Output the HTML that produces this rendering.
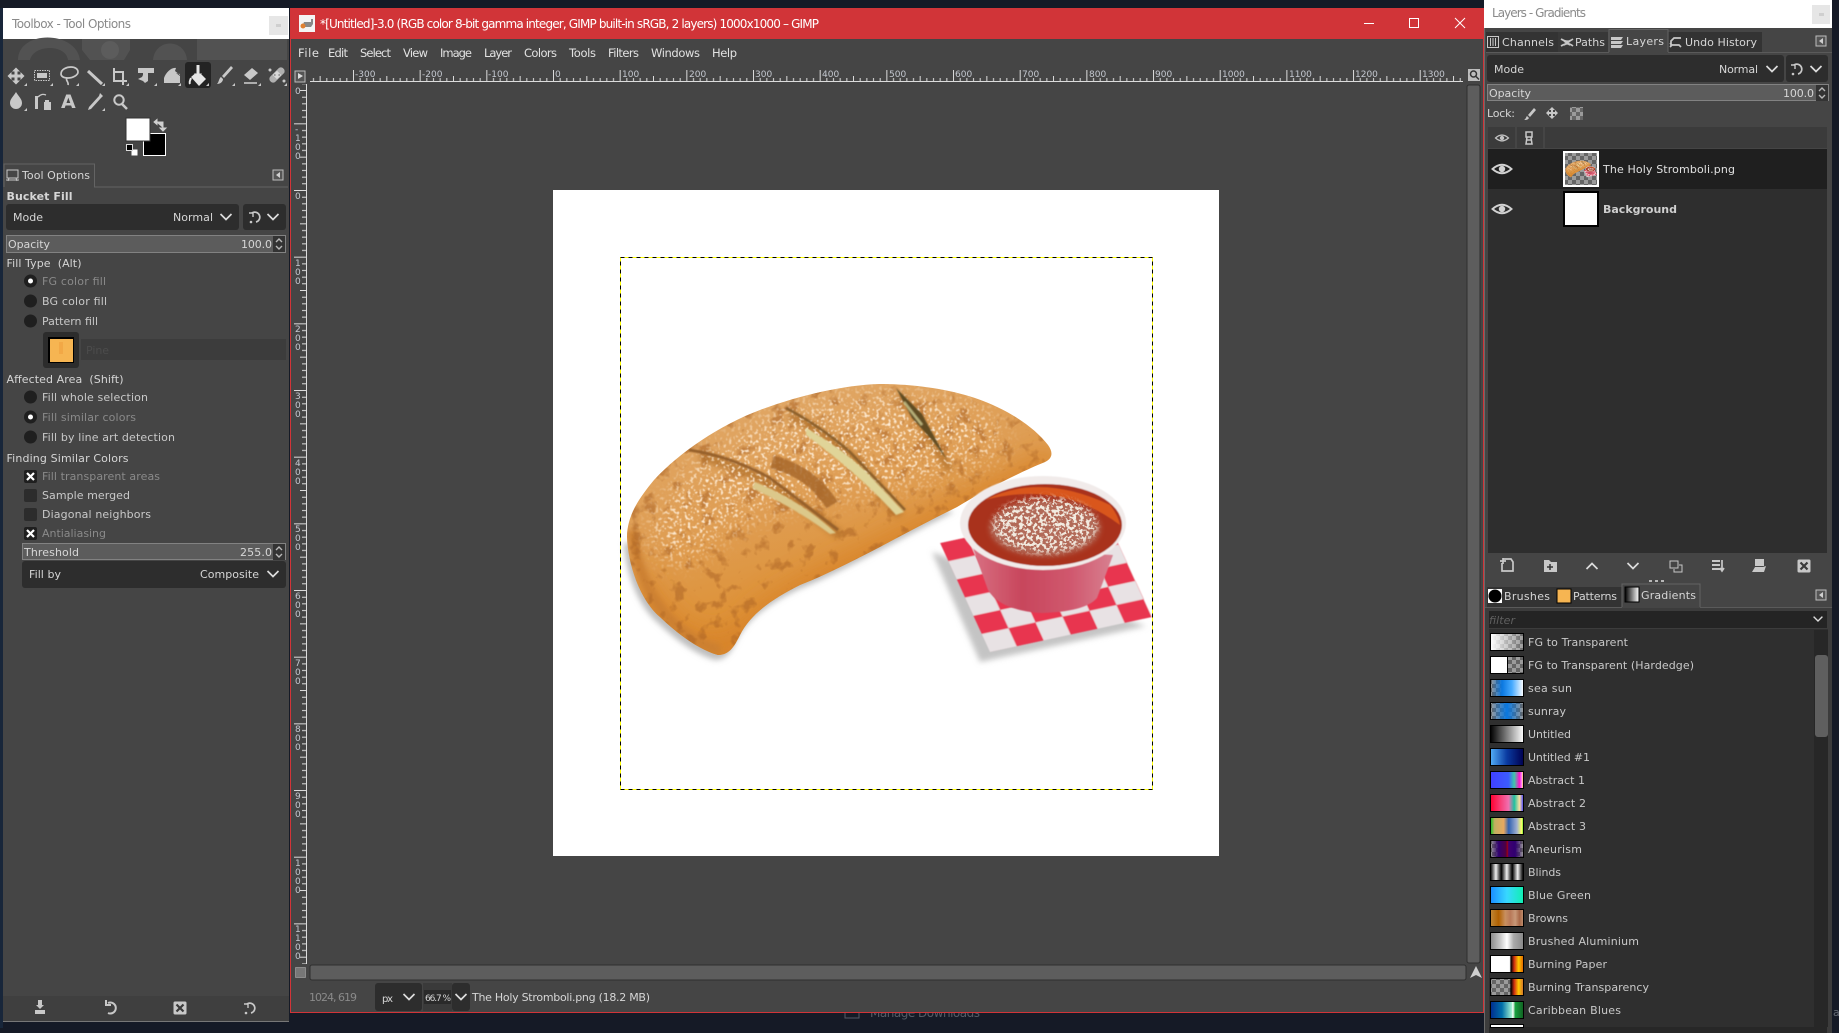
<!DOCTYPE html>
<html lang="en">
<head>
<meta charset="utf-8">
<title>GIMP</title>
<style>
html,body{margin:0;padding:0;background:#151a26;width:1839px;height:1033px;overflow:hidden}
svg{display:block}
text{font-family:"DejaVu Sans","Liberation Sans",sans-serif;font-size:11px;fill:#d6d6d6}
.g{fill:#8a8a8a}
.l{fill:#c9c9c9}
.b{font-weight:bold}
.r{font-size:9px;fill:#c4c8d0}
.m{font-size:11.5px;fill:#e2e2e2}
.i{fill:none;stroke:#c8c8c8;stroke-width:1.7}
.f{fill:#c8c8c8}
</style>
</head>
<body>
<svg width="1839" height="1033" viewBox="0 0 1839 1033" xmlns="http://www.w3.org/2000/svg">
<defs>
<path id="chev" d="M-5.5-3 0 2.5 5.5-3" fill="none" stroke="#dcdcdc" stroke-width="1.7"/>
<g id="reset" fill="none" stroke="#c8c8c8" stroke-width="1.7"><path d="M-3-4A5 5 0 1 1 1 5"/><path d="M-6-4H-2V0" stroke-width="1.4"/><circle cx="-4" cy="5" r="1.3" fill="#c8c8c8" stroke="none"/></g>
<g id="spin"><rect x="-6" y="-8" width="12" height="16" fill="#333"/><path d="M-3-2 0-5 3-2M-3 2 0 5 3 2" fill="none" stroke="#b8b8b8" stroke-width="1.4"/></g>
<g id="eye"><path d="M-9.5 0Q0-8.5 9.5 0Q0 8.5-9.5 0Z" fill="none" stroke="#d2d2d2" stroke-width="1.9"/><circle r="3.2" fill="#d2d2d2"/></g>
<g id="cfg"><rect x="-5" y="-5" width="10" height="10" fill="#555" stroke="#bdbdbd"/><path d="M2-3V3L-2 0Z" fill="#d0d0d0"/></g>
<g id="xbox"><rect x="-6.5" y="-6.5" width="13" height="13" rx="1.5" fill="#c8c8c8"/><path d="M-3.5-3.5 3.5 3.5M3.5-3.5-3.5 3.5" stroke="#3a3a3a" stroke-width="2.2"/></g>
<path id="corner" d="M3 0V3H0Z" fill="#c8c8c8"/>
<pattern id="chk2" width="8" height="8" patternUnits="userSpaceOnUse"><rect width="8" height="8" fill="#9b9b9b"/><rect width="4" height="4" fill="#656565"/><rect x="4" y="4" width="4" height="4" fill="#656565"/></pattern>
<pattern id="hr" x="553" y="70" width="66.67" height="12" patternUnits="userSpaceOnUse"><path d="M.5 0V12M7.17 8V12M13.83 8V12M20.5 8V12M27.17 8V12M33.83 6V12M40.5 8V12M47.17 8V12M53.83 8V12M60.5 8V12" stroke="#dcdcdc" fill="none"/></pattern>
<pattern id="vr" x="294" y="190" width="12" height="66.67" patternUnits="userSpaceOnUse"><path d="M0 .5H12M8 7.17H12M8 13.83H12M8 20.5H12M8 27.17H12M6 33.83H12M8 40.5H12M8 47.17H12M8 53.83H12M8 60.5H12" stroke="#dcdcdc" fill="none"/></pattern>
<pattern id="nap" width="2" height="2" patternUnits="userSpaceOnUse" patternTransform="matrix(27 -5.8 8.3 18.2 940 543)"><rect width="2" height="2" fill="#e8e2e4"/><rect width="1" height="1" fill="#e8354f"/><rect x="1" y="1" width="1" height="1" fill="#e8354f"/></pattern>
<linearGradient id="breadG" x1="0.15" y1="0.05" x2="0.55" y2="1"><stop offset="0" stop-color="#e0a868"/><stop offset=".45" stop-color="#df9d52"/><stop offset=".75" stop-color="#de9238"/><stop offset="1" stop-color="#cf7f28"/></linearGradient>
<linearGradient id="cupG" x1="0" x2="1"><stop offset="0" stop-color="#d87082"/><stop offset=".35" stop-color="#c8465c"/><stop offset=".7" stop-color="#d0586e"/><stop offset="1" stop-color="#d88090"/></linearGradient>
<filter id="b1" x="-20%" y="-20%" width="140%" height="140%"><feGaussianBlur stdDeviation=".8"/></filter>
<filter id="b3" x="-30%" y="-30%" width="160%" height="160%"><feGaussianBlur stdDeviation="3"/></filter>
<filter id="b8" x="-40%" y="-40%" width="180%" height="180%"><feGaussianBlur stdDeviation="12"/></filter>
<filter id="b05"><feGaussianBlur stdDeviation=".6"/></filter>
<filter id="speck" x="0" y="0" width="1" height="1" color-interpolation-filters="sRGB"><feTurbulence type="fractalNoise" baseFrequency=".34" numOctaves="2" seed="4"/><feColorMatrix values="0 0 0 0 1 0 0 0 0 .93 0 0 0 0 .84 10 0 0 0 -5.6"/><feGaussianBlur stdDeviation=".45"/></filter>
<filter id="dark" x="0" y="0" width="1" height="1" color-interpolation-filters="sRGB"><feTurbulence type="fractalNoise" baseFrequency=".07" numOctaves="3" seed="9"/><feColorMatrix values="0 0 0 0 .66 0 0 0 0 .38 0 0 0 0 .14 6 0 0 0 -3.4"/></filter>
<filter id="parm" x="0" y="0" width="1" height="1" color-interpolation-filters="sRGB"><feTurbulence type="fractalNoise" baseFrequency=".3" numOctaves="2" seed="7"/><feColorMatrix values="0 0 0 0 .95 0 0 0 0 .92 0 0 0 0 .88 10 0 0 0 -4.8"/></filter>
<clipPath id="breadC"><path d="M627 537C628 565 640 600 660 617C680 636 700 650 718 655C730 655 735 645 740 635C750 615 770 600 800 585C850 565 900 535 957 507C985 490 1020 472 1045 462C1053 458 1053 452 1048 445C1035 428 1010 410 975 398C945 388 910 384 879 384C845 385 800 395 760 410C720 425 680 452 654 480C640 497 627 515 627 537Z"/></clipPath>
<clipPath id="sauceC"><ellipse cx="1045" cy="525" rx="76" ry="40"/></clipPath>
<clipPath id="thumbC"><rect x="1565" y="153" width="32" height="32"/></clipPath>
<mask id="sugarM"><rect x="600" y="370" width="470" height="300" fill="#000"/><path d="M650 530C670 470 730 430 800 405C860 388 930 390 980 410C1000 425 1010 440 1000 455C960 470 900 490 850 495C790 500 740 520 710 545C680 570 660 570 650 530Z" fill="#fff" filter="url(#b8)"/></mask>
<mask id="parmM"><rect x="960" y="480" width="170" height="95" fill="#000"/><ellipse cx="1045" cy="525" rx="52" ry="28" fill="#fff" filter="url(#b3)"/></mask>
<g id="pizza">
  <path d="M627 537C628 565 640 600 660 617C680 636 700 650 718 655C730 655 735 645 740 635C750 615 770 600 800 585C850 565 900 535 957 507L930 500L700 560Z" transform="translate(-3 5)" fill="#bdbdbd" filter="url(#b3)"/>
  <polygon points="936,548 984,658 1150,622 1120,612" fill="#c4c4c4" filter="url(#b3)" transform="translate(-4 4)"/>
  <g filter="url(#b05)">
  <polygon points="940,543 1102,508 1152,617 990,652" fill="url(#nap)"/>
  </g>
  <g clip-path="url(#breadC)">
    <rect x="620" y="380" width="440" height="280" fill="url(#breadG)"/>
    <path d="M640 560C680 640 720 650 750 610C800 570 880 540 950 500L1050 450L1060 470L950 530L740 670H640Z" fill="#d8842a" filter="url(#b8)" opacity=".9"/>
    <path d="M632 530C640 600 680 640 720 650" fill="none" stroke="#cc8030" stroke-width="10" filter="url(#b3)"/>
    <rect x="620" y="380" width="440" height="280" filter="url(#dark)" opacity=".5"/>
    <g fill="none" stroke="#b0702c" filter="url(#b3)" opacity=".75">
      <path d="M700 456Q745 468 780 490L840 535" stroke-width="9"/>
      <path d="M790 415Q830 435 860 465L900 515" stroke-width="9"/>
      <path d="M900 395L925 430L950 470" stroke-width="8"/>
    </g>
    <g mask="url(#sugarM)"><rect x="620" y="380" width="440" height="280" filter="url(#speck)"/></g>
    <g filter="url(#b1)">
      <path d="M689 450Q730 456 770 478L838 530" fill="none" stroke="#96602a" stroke-width="3"/>
      <path d="M755 482Q800 500 836 533L830 534Q795 508 752 488Z" fill="#dcc88a"/>
      <path d="M772 462Q812 472 832 505" fill="none" stroke="#a8672a" stroke-width="13" opacity=".85"/>
      <path d="M786 408Q820 426 850 452L905 510" fill="none" stroke="#8a5e2a" stroke-width="2.500"/>
      <path d="M806 428Q848 452 872 478L904 512L896 515Q860 475 806 435Z" fill="#e0d498"/>
      <path d="M896 388L922 414L947 460L932 440L912 418Z" fill="#5f4c24"/>
      <path d="M904 402L922 425" fill="none" stroke="#b9b27a" stroke-width="2.500"/>
    </g>
  </g>
  <g filter="url(#b05)">
    <path d="M973 548L988 590Q1000 610 1040 613Q1085 612 1097 598L1113 555Z" fill="url(#cupG)"/>
    <ellipse cx="1043" cy="523" rx="83" ry="47" fill="#f1ebea"/>
    <ellipse cx="1045" cy="525" rx="77" ry="41" fill="#a9331e"/>
    <path d="M985 500Q1040 472 1110 505Q1118 515 1120 525Q1060 480 985 500Z" fill="#d9561c"/>
  </g>
  <g clip-path="url(#sauceC)">
    <ellipse cx="1045" cy="528" rx="55" ry="28" fill="#b26a58" filter="url(#b3)"/>
    <g mask="url(#parmM)"><rect x="970" y="485" width="150" height="80" filter="url(#parm)"/></g>
  </g>
</g>
<linearGradient id="g0"><stop offset="0" stop-color="#fff"/><stop offset="1" stop-color="#fff" stop-opacity="0"/></linearGradient>
<linearGradient id="g2"><stop offset="0" stop-color="#0a6fd0" stop-opacity="0"/><stop offset=".35" stop-color="#0a78e0"/><stop offset=".65" stop-color="#46aaff"/><stop offset="1" stop-color="#fff"/></linearGradient>
<linearGradient id="g3"><stop offset="0" stop-color="#0a78e0" stop-opacity="0"/><stop offset=".5" stop-color="#0a78e0"/><stop offset="1" stop-color="#0a78e0" stop-opacity="0"/></linearGradient>
<linearGradient id="g4"><stop offset="0" stop-color="#000"/><stop offset="1" stop-color="#fff"/></linearGradient>
<linearGradient id="g5"><stop offset="0" stop-color="#52aef8"/><stop offset=".5" stop-color="#0a3aa0"/><stop offset="1" stop-color="#000050"/></linearGradient>
<linearGradient id="g6"><stop offset="0" stop-color="#4040ff"/><stop offset=".55" stop-color="#3c5cff"/><stop offset=".72" stop-color="#3cc8a8"/><stop offset=".88" stop-color="#ff10c8"/><stop offset=".95" stop-color="#ff90ff"/><stop offset="1" stop-color="#ffff00"/></linearGradient>
<linearGradient id="g7"><stop offset="0" stop-color="#ff0030"/><stop offset=".55" stop-color="#f070b0"/><stop offset=".72" stop-color="#20c0a0"/><stop offset=".88" stop-color="#ffe0a0"/><stop offset="1" stop-color="#4040ff"/></linearGradient>
<linearGradient id="g8"><stop offset="0" stop-color="#10c020"/><stop offset=".12" stop-color="#c0b060"/><stop offset=".4" stop-color="#e8a860"/><stop offset=".55" stop-color="#3060b0"/><stop offset=".8" stop-color="#a0b0d0"/><stop offset=".95" stop-color="#ffff60"/><stop offset="1" stop-color="#20e020"/></linearGradient>
<linearGradient id="g9"><stop offset="0" stop-color="#300060" stop-opacity="0"/><stop offset=".25" stop-color="#300070"/><stop offset=".48" stop-color="#500040"/><stop offset=".5" stop-color="#b00000"/><stop offset=".55" stop-color="#400070"/><stop offset=".75" stop-color="#300070"/><stop offset="1" stop-color="#300060" stop-opacity="0"/></linearGradient>
<linearGradient id="g10" spreadMethod="repeat" x2=".33"><stop offset="0" stop-color="#000"/><stop offset=".5" stop-color="#f0f0f0"/><stop offset=".8" stop-color="#555"/><stop offset="1" stop-color="#000"/></linearGradient>
<linearGradient id="g11"><stop offset="0" stop-color="#1a8cff"/><stop offset=".5" stop-color="#38d8ff"/><stop offset="1" stop-color="#10f0b0"/></linearGradient>
<linearGradient id="g12"><stop offset="0" stop-color="#c08838"/><stop offset=".25" stop-color="#b06000"/><stop offset=".45" stop-color="#c89060"/><stop offset=".6" stop-color="#b87858"/><stop offset=".75" stop-color="#c89878"/><stop offset=".88" stop-color="#a86848"/><stop offset="1" stop-color="#c09070"/></linearGradient>
<linearGradient id="g13"><stop offset="0" stop-color="#8a8a8a"/><stop offset=".3" stop-color="#c8c8c8"/><stop offset=".5" stop-color="#fff"/><stop offset=".7" stop-color="#aaa"/><stop offset="1" stop-color="#888"/></linearGradient>
<linearGradient id="g14"><stop offset="0" stop-color="#fff"/><stop offset=".58" stop-color="#fff"/><stop offset=".62" stop-color="#000"/><stop offset=".72" stop-color="#d03010"/><stop offset=".85" stop-color="#ffc800"/><stop offset="1" stop-color="#e06000"/></linearGradient>
<linearGradient id="g15"><stop offset=".58" stop-color="#000" stop-opacity="0"/><stop offset=".62" stop-color="#000"/><stop offset=".72" stop-color="#d03010"/><stop offset=".85" stop-color="#ffc800"/><stop offset="1" stop-color="#d07030"/></linearGradient>
<linearGradient id="g16"><stop offset="0" stop-color="#002c90"/><stop offset=".35" stop-color="#0070a8"/><stop offset=".64" stop-color="#a0f0d0"/><stop offset=".68" stop-color="#fff"/><stop offset=".75" stop-color="#18a040"/><stop offset="1" stop-color="#106020"/></linearGradient>
</defs>

<!-- desktop -->
<rect width="1839" height="1033" fill="#151a26"/>
<rect x="0" y="8" width="3" height="1020" fill="#18263a"/>
<text x="870" y="1017" style="fill:#555b66;font-size:12px" textLength="110">Manage Downloads</text>
<rect x="845" y="1006" width="14" height="12" fill="none" stroke="#555b66"/>
<text x="1833" y="1016" style="fill:#666c76">at</text>

<!-- TOOLBOX WINDOW -->
<rect x="3" y="8" width="286" height="1013" fill="#454545"/>
<rect x="3" y="8" width="286" height="31" fill="#fff"/>
<text x="12" y="28" class="g" style="font-size:12px" textLength="119">Toolbox - Tool Options</text>
<rect x="269" y="16" width="19" height="19" fill="#e6e6e6"/><rect x="276" y="24" width="5" height="3" fill="#cfcfcf"/>
<g fill="#525252">
  <path d="M18 60C18 30 76 30 80 60H68C66 44 34 44 30 60Z"/>
  <path d="M82 39H130V50L124 60H90L82 50Z"/>
  <circle cx="110" cy="50" r="9" fill="#5c5c5c"/>
  <path d="M153 60C155 38 185 38 187 60Z"/>
  <rect x="197" y="39" width="90" height="21"/>
</g>
<!-- tools -->
<rect x="185" y="62" width="26" height="26" rx="3" fill="#232323"/>
<g fill="#c8c8c8">
  <!-- move -->
  <path d="M16 67l4 4h-2.500v3h3v-2.500l4 4-4 4V77h-3v3H20l-4 4-4-4h2.500v-3h-3v2.500l-4-4 4-4V74h3v-3H12z" transform="translate(0 .5)"/>
  <!-- rect select -->
  <rect x="34.500" y="70.500" width="15" height="10" fill="none" stroke="#c8c8c8" stroke-dasharray="1.500 1"/><rect x="37" y="73" width="10" height="5"/>
  <!-- crop -->
  <path d="M113 68h2v3h9v9h3v2h-3v3h-2v-3h-9zM115 73v7h7v-7z"/>
  <!-- transform -->
  <path d="M138 68h16v5h-6v8l-3 2-2-2-5-2 4-2 1-2v-2h-5z"/>
  <!-- warp -->
  <path d="M164 83v-5c2-6 8-11 12-10l-1 3 5 4v8zM176 73l4 3v-2z"/>
  <!-- bucket -->
  <path d="M191 77l7-6 8 8-7 7z" fill="#e6e6e6"/><path d="M198 65v10" stroke="#232323" stroke-width="5"/><path d="M198 65v9" stroke="#e6e6e6" stroke-width="3"/><path d="M194 73.500h8l-4 4z" fill="#e6e6e6"/><path d="M191 78c-1 3-2 4-1 6" fill="none" stroke="#e6e6e6" stroke-width="2"/>
  <!-- brush -->
  <path d="M231 66l2 2-9 10-2-2zM221 77l2 2c0 3-3 5-6 5 2-2 2-6 4-7z"/>
  <!-- eraser -->
  <path d="M252 68l6 5-8 7-6-5z"/><path d="M244 83h13" stroke="#c8c8c8" stroke-width="1.600"/>
  <!-- heal -->
  <g transform="translate(277 75) rotate(-45)"><rect x="-9" y="-3.500" width="18" height="7" rx="3" /><rect x="-3.500" y="-9" width="7" height="18" rx="3" transform="rotate(90)" fill="#b0b0b0"/><rect x="-3" y="-3" width="6" height="6" fill="#d8d8d8"/><circle cx="-1.500" cy="-1.500" r=".7" fill="#555"/><circle cx="1.500" cy="1.500" r=".7" fill="#555"/></g>
  <circle cx="270" cy="70" r="1.500"/><circle cx="284" cy="81" r="1.500"/>
  <!-- drop -->
  <path d="M16 92c3 5 6 7 6 11a6 6 0 0 1-12 0c0-4 3-6 6-11z"/>
  <!-- path -->
  <path d="M35 96h3v13h-3zM45 100h4v2h2v8h-7v-8h1z"/><path d="M38 97c3-3 5-3 8-2" fill="none" stroke="#c8c8c8" stroke-width="1.300"/>
  <!-- picker -->
  <path d="M100 93l3 3-2 2-10 11-3 1 1-3 10-11z"/>
</g>
<g class="i"><path d="M61 74c0-5 6-7 10-7s7 2 7 5-5 6-10 6-7-2-7-4zM67 78c-2 2 2 4 1 7"/><path d="M88 71l14 13" stroke-width="3"/><circle cx="119" cy="100" r="4.700" stroke-width="2"/><path d="M122 104l5 5" stroke-width="2.500"/></g>
<text x="61" y="108" class="b" style="font-size:19px;fill:#c8c8c8">A</text>
<g>
<use href="#corner" x="24" y="83"/><use href="#corner" x="50" y="83"/><use href="#corner" x="76" y="83"/><use href="#corner" x="102" y="83"/><use href="#corner" x="126" y="83"/><use href="#corner" x="154" y="83"/><use href="#corner" x="178" y="83"/><use href="#corner" x="206" y="83"/><use href="#corner" x="232" y="83"/><use href="#corner" x="258" y="83"/><use href="#corner" x="284" y="83"/><use href="#corner" x="24" y="108"/><use href="#corner" x="102" y="108"/>
</g>
<!-- colours -->
<rect x="143.500" y="133.500" width="22" height="22" fill="#000" stroke="#fff"/>
<rect x="126" y="118" width="24" height="23" fill="#fff" stroke="#333"/>
<path d="M156 122h7v6M154 122l3-2.500v5zM160 128l3 3 3-3z" fill="#d0d0d0" stroke="#d0d0d0" stroke-width="1"/>
<rect x="131.500" y="149.500" width="6" height="6" fill="#fff"/><rect x="126.500" y="144.500" width="6" height="6" fill="#000" stroke="#ddd"/>
<!-- tool options tab -->
<path d="M4 187V164H94.500V187H288" fill="none" stroke="#646464"/>
<rect x="7" y="170" width="11" height="8" fill="none" stroke="#c8c8c8"/><path d="M6 180h13M9 178l-1 3M16 178l1 3" stroke="#c8c8c8"/>
<text x="22" y="179" textLength="68">Tool Options</text>
<use href="#cfg" x="278" y="175"/>
<text x="6.500" y="200" class="b" textLength="66">Bucket Fill</text>
<rect x="6" y="204" width="233" height="26" rx="3" fill="#2d2d2d"/>
<text x="13" y="221" textLength="30">Mode</text><text x="173" y="221" textLength="40">Normal</text><use href="#chev" x="226" y="217"/>
<rect x="243" y="204" width="43" height="26" rx="3" fill="#2d2d2d"/><use href="#reset" x="255" y="217" /><use href="#chev" x="273" y="217"/>
<rect x="6.500" y="235.500" width="279" height="17" fill="#5c5c5c" stroke="#828282"/>
<text x="8" y="248" textLength="42">Opacity</text><text x="241" y="248" textLength="31">100.0</text><use href="#spin" x="279" y="244"/>
<text x="6.500" y="267" textLength="75" xml:space="preserve">Fill Type  (Alt)</text>
<g fill="#1f1f1f"><circle cx="30.500" cy="281" r="6.500"/><circle cx="30.500" cy="301" r="6.500"/><circle cx="30.500" cy="321" r="6.500"/><circle cx="30.500" cy="397" r="6.500"/><circle cx="30.500" cy="417" r="6.500"/><circle cx="30.500" cy="437" r="6.500"/></g>
<circle cx="30.500" cy="281" r="2.500" fill="#fff"/><circle cx="30.500" cy="417" r="2.500" fill="#fff"/>
<text x="42" y="285" class="g" textLength="64">FG color fill</text>
<text x="42" y="305" class="l" textLength="65">BG color fill</text>
<text x="42" y="325" class="l" textLength="56">Pattern fill</text>
<rect x="43" y="332" width="36" height="36" rx="3" fill="#2c2c2c"/><rect x="48" y="337" width="26" height="26" fill="#000"/><rect x="50" y="339" width="23" height="23" fill="#f6b552"/><rect x="59" y="342" width="4" height="12" fill="#f0a040" opacity=".6"/>
<rect x="81" y="339" width="205" height="21" fill="#3c3c3c"/><text x="86" y="354" style="fill:#4c4c4c" textLength="23">Pine</text>
<text x="6.500" y="383" textLength="117" xml:space="preserve">Affected Area  (Shift)</text>
<text x="42" y="401" class="l" textLength="106">Fill whole selection</text>
<text x="42" y="421" class="g" textLength="94">Fill similar colors</text>
<text x="42" y="441" class="l" textLength="133">Fill by line art detection</text>
<text x="6.500" y="462" textLength="122">Finding Similar Colors</text>
<g><rect x="24" y="470" width="13" height="13" rx="2" fill="#1f1f1f"/><rect x="24" y="489" width="13" height="13" rx="2" fill="#2c2c2c"/><rect x="24" y="508" width="13" height="13" rx="2" fill="#2c2c2c"/><rect x="24" y="527" width="13" height="13" rx="2" fill="#1f1f1f"/></g>
<path d="M27 473l7 7M34 473l-7 7M27 530l7 7M34 530l-7 7" stroke="#fff" stroke-width="2.200"/>
<text x="42" y="480" class="g" textLength="118">Fill transparent areas</text>
<text x="42" y="499" class="l" textLength="88">Sample merged</text>
<text x="42" y="518" class="l" textLength="109">Diagonal neighbors</text>
<text x="42" y="537" class="g" textLength="64">Antialiasing</text>
<rect x="22.500" y="543.500" width="263" height="16" fill="#5c5c5c" stroke="#828282"/>
<text x="24" y="556" textLength="55">Threshold</text><text x="240" y="556" textLength="32">255.0</text><use href="#spin" x="279" y="552"/>
<rect x="22" y="561" width="264" height="27" rx="3" fill="#2d2d2d"/>
<text x="29" y="578" textLength="32">Fill by</text><text x="200" y="578" textLength="59">Composite</text><use href="#chev" x="273" y="574"/>
<!-- toolbox bottom -->
<rect x="3" y="996" width="286" height="25" fill="#3f3f3f"/>
<path d="M38 1000h4v5h2l-4 4-4-4h2zM35 1010h10v4H35z" fill="#c8c8c8"/>
<path d="M108 1003A5.500 5.500 0 1 1 108 1013M106 1000v5h5" fill="none" stroke="#c8c8c8" stroke-width="2"/>
<use href="#xbox" x="180" y="1008"/>
<use href="#reset" x="250" y="1008"/>
<path d="M3 1021.500H289" stroke="#777"/>

<!-- MAIN WINDOW -->
<rect x="290" y="8" width="1194" height="1005" fill="#d13438"/>
<rect x="291" y="39" width="1192" height="973" fill="#454545"/>
<rect x="299" y="15" width="16" height="17" fill="#f4f4f4"/><path d="M302 27l2-5h7v-3h2v5l-2 3z" fill="#888"/><circle cx="303" cy="26" r="2.500" fill="#e08030"/>
<text x="320" y="28" style="font-size:12px;fill:#fff" textLength="499">*[Untitled]-3.0 (RGB color 8-bit gamma integer, GIMP built-in sRGB, 2 layers) 1000x1000 – GIMP</text>
<path d="M1364 23.500h10" stroke="#fff"/><rect x="1409.500" y="18.500" width="9" height="9" fill="none" stroke="#fff"/><path d="M1455 18l10 10M1465 18l-10 10" stroke="#fff"/>
<text x="298" y="57" class="m" textLength="21">File</text>
<text x="328" y="57" class="m" textLength="20">Edit</text>
<text x="360" y="57" class="m" textLength="31">Select</text>
<text x="403" y="57" class="m" textLength="25">View</text>
<text x="440" y="57" class="m" textLength="32">Image</text>
<text x="484" y="57" class="m" textLength="28">Layer</text>
<text x="524" y="57" class="m" textLength="33">Colors</text>
<text x="569" y="57" class="m" textLength="27">Tools</text>
<text x="608" y="57" class="m" textLength="31">Filters</text>
<text x="651" y="57" class="m" textLength="49">Windows</text>
<text x="712" y="57" class="m" textLength="25">Help</text>
<!-- rulers -->
<rect x="295" y="71" width="10" height="11" fill="#555" stroke="#bbb"/><path d="M298 73v6l5-3z" fill="#ddd"/>
<rect x="310" y="70" width="1153" height="12" fill="url(#hr)"/>
<path d="M310 81.500H1463" stroke="#dcdcdc"/>
<g>
<text class="r" x="355" y="77">-300</text><text class="r" x="422" y="77">-200</text><text class="r" x="488" y="77">-100</text><text class="r" x="555" y="77">0</text><text class="r" x="622" y="77">100</text><text class="r" x="689" y="77">200</text><text class="r" x="755" y="77">300</text><text class="r" x="822" y="77">400</text><text class="r" x="889" y="77">500</text><text class="r" x="955" y="77">600</text><text class="r" x="1022" y="77">700</text><text class="r" x="1089" y="77">800</text><text class="r" x="1155" y="77">900</text><text class="r" x="1222" y="77">1000</text><text class="r" x="1289" y="77">1100</text><text class="r" x="1355" y="77">1200</text><text class="r" x="1422" y="77">1300</text>
</g>
<rect x="294" y="84" width="12" height="880" fill="url(#vr)"/>
<path d="M306.500 84V964" stroke="#dcdcdc"/>
<text class="r" x="295" y="94">0</text>
<text class="r" x="295 295 295 295" y="132 141 150 159">-100</text>
<text class="r" x="295" y="199">0</text>
<text class="r" x="295 295 295" y="266 275 284">100</text>
<text class="r" x="295 295 295" y="332 341 350">200</text>
<text class="r" x="295 295 295" y="399 408 417">300</text>
<text class="r" x="295 295 295" y="466 475 484">400</text>
<text class="r" x="295 295 295" y="532 541 550">500</text>
<text class="r" x="295 295 295" y="599 608 617">600</text>
<text class="r" x="295 295 295" y="666 675 684">700</text>
<text class="r" x="295 295 295" y="732 741 750">800</text>
<text class="r" x="295 295 295" y="799 808 817">900</text>
<text class="r" x="295 295 295 295" y="866 875 884 893">1000</text>
<text class="r" x="295 295 295 295" y="932 941 950 959">1100</text>
<rect x="1468" y="69" width="12" height="12" fill="#bdbdbd"/><circle cx="1473.500" cy="74" r="3" fill="none" stroke="#333" stroke-width="1.500"/><path d="M1476 76.500l3 3" stroke="#333" stroke-width="1.500"/>
<rect x="1467" y="85" width="13" height="878" rx="2" fill="#5d5d5d" stroke="#2e2e2e"/>
<rect x="310" y="965" width="1156" height="15" rx="2" fill="#5d5d5d" stroke="#2e2e2e"/>
<rect x="295.500" y="967.500" width="10" height="10" fill="#777" stroke="#bbb" stroke-dasharray="1 1"/>
<path d="M1476 966l6 12-6-3-6 3z" fill="#d0d0d0"/>
<!-- canvas -->
<rect x="553" y="190" width="666" height="666" fill="#fff"/>
<use href="#pizza"/>
<rect x="620.500" y="257.500" width="532" height="532" fill="none" stroke="#ffff00"/>
<rect x="620.500" y="257.500" width="532" height="532" fill="none" stroke="#000" stroke-dasharray="4 4"/>
<!-- status bar -->
<text x="309" y="1001" class="g" textLength="48">1024, 619</text>
<rect x="375" y="983" width="47" height="28" rx="3" fill="#2d2d2d"/><text x="382" y="1002" textLength="11" style="font-size:10px">px</text><use href="#chev" x="409" y="997"/>
<rect x="423" y="983" width="29" height="28" fill="#3a3a3a"/><rect x="424" y="990" width="27" height="14" fill="#2a2a2a"/><text x="425" y="1001" style="font-size:9px" textLength="26">66.7 %</text>
<rect x="452" y="983" width="18" height="28" rx="3" fill="#2d2d2d"/><use href="#chev" x="461" y="997"/>
<text x="472" y="1001" textLength="178">The Holy Stromboli.png (18.2 MB)</text>

<!-- RIGHT WINDOW -->
<rect x="1484" y="0" width="348" height="1033" fill="#454545"/>
<rect x="1484" y="28" width="1" height="1005" fill="#6a6a6a"/>
<rect x="1484" y="0" width="348" height="28" fill="#fff"/>
<text x="1492" y="17" class="g" style="font-size:12px" textLength="94">Layers - Gradients</text>
<rect x="1812" y="5" width="18" height="19" fill="#e6e6e6"/><rect x="1819" y="13" width="5" height="3" fill="#cfcfcf"/>
<!-- tabs -->
<rect x="1486" y="32" width="72" height="20" fill="#333"/><rect x="1558" y="32" width="50" height="20" fill="#383838"/><rect x="1668" y="32" width="94" height="20" fill="#333"/>
<path d="M1609 52V29.500H1668V52" fill="none" stroke="#646464"/><path d="M1486 52.500H1609M1668 52.500H1832" stroke="#5a5a5a"/>
<rect x="1487.500" y="36.500" width="11" height="11" fill="none" stroke="#c8c8c8"/><path d="M1490.500 38v8M1493 38v8M1495.500 38v8" stroke="#c8c8c8"/>
<text x="1502" y="46" textLength="52">Channels</text>
<path d="M1561 39c5 3 8 3 12 0M1561 46c5-3 8-3 12 0M1564 41l6 4M1570 41l-6 4" class="i" stroke-width="1.500"/>
<text x="1575" y="46" textLength="30">Paths</text>
<path d="M1611 37h12l-2 3h-10zM1611 41h12l-2 3h-10zM1611 45h12l-2 3h-10z" fill="#c8c8c8"/>
<text x="1626" y="45" textLength="38">Layers</text>
<path d="M1681 38h-7l-3 3v4h8l2 2M1672 45l-2-2m2 2l-2 2" class="i" stroke-width="1.400"/>
<text x="1685" y="46" textLength="72">Undo History</text>
<use href="#cfg" x="1821" y="41"/>
<rect x="1487" y="55" width="297" height="27" rx="3" fill="#2d2d2d"/><text x="1494" y="73" textLength="30">Mode</text><text x="1719" y="73" textLength="39">Normal</text><use href="#chev" x="1772" y="69"/>
<rect x="1786" y="55" width="42" height="27" rx="3" fill="#2d2d2d"/><use href="#reset" x="1797" y="69"/><use href="#chev" x="1816" y="69"/>
<rect x="1487.500" y="84.500" width="341" height="16" fill="#5c5c5c" stroke="#828282"/>
<text x="1489" y="97" textLength="42">Opacity</text><text x="1783" y="97" textLength="31">100.0</text><use href="#spin" x="1822" y="93"/>
<text x="1487" y="117" textLength="28">Lock:</text>
<path d="M1534 108l2 2-6 7-2-2zM1527 116l2 2c-1 2-3 2-5 2 2-1 2-3 3-4z" fill="#c8c8c8"/>
<path d="M1552 107l3 3h-2v2h2v-2l3 3-3 3v-2h-2v2h2l-3 3-3-3h2v-2h-2v2l-3-3 3-3v2h2v-2h-2z" fill="#c8c8c8"/>
<rect x="1570" y="107" width="13" height="13" fill="url(#chk2)"/>
<rect x="1488" y="127" width="27" height="21" fill="#3b3b3b"/><rect x="1517" y="127" width="26" height="21" fill="#3b3b3b"/><rect x="1545" y="127" width="282" height="21" fill="#3b3b3b"/>
<g transform="translate(1502 138) scale(.68)" opacity=".9"><use href="#eye"/></g>
<path d="M1526 132h6v5h-6zM1527 137l-1 7h6l-1-7M1526 140h6" fill="none" stroke="#c8c8c8" stroke-width="1.500"/>
<rect x="1488" y="149" width="339" height="404" fill="#2e2e2e"/>
<rect x="1488" y="149" width="339" height="40" fill="#1f1f1f"/>
<use href="#eye" x="1502" y="169"/><use href="#eye" x="1502" y="209"/>
<rect x="1563" y="151" width="36" height="36" fill="#fff"/><rect x="1565" y="153" width="32" height="32" fill="url(#chk2)"/>
<g clip-path="url(#thumbC)"><use href="#pizza" transform="translate(1527.800 137.600) scale(.06)"/></g>
<text x="1603" y="173" style="fill:#e0e0e0" textLength="132">The Holy Stromboli.png</text>
<rect x="1563" y="191" width="36" height="36" fill="#000"/><rect x="1565" y="193" width="32" height="32" fill="#fff"/>
<text x="1603" y="213" class="b" style="fill:#cfcfcf" textLength="74">Background</text>
<!-- layer buttons -->
<path d="M1503 559h8l2 3v9h-11v-8M1500 561h6M1503 558v6" class="i" stroke-width="1.600"/>
<path d="M1544 560h5l2 2h6v10h-13z" fill="#c8c8c8"/><path d="M1550 564v6M1547 567h6" stroke="#333" stroke-width="1.500"/>
<use href="#chev" transform="translate(1592 566) rotate(180)"/><use href="#chev" x="1633" y="566"/>
<rect x="1670" y="561" width="8" height="7" fill="none" stroke="#c8c8c8"/><path d="M1679 565h3v7h-8v-3" fill="none" stroke="#c8c8c8"/>
<path d="M1712 561h8M1712 565h8M1712 569h8" stroke="#c8c8c8" stroke-width="2"/><path d="M1722 560v10m-2-2l2 3 2-3" class="i" stroke-width="1.500"/>
<path d="M1755 559h9v7h-9zM1752 572l3-5h8l3-1-2 6z" fill="#c8c8c8"/>
<use href="#xbox" x="1804" y="566"/>
<path d="M1649 581h3M1655 581h3M1661 581h3" stroke="#b8b8b8" stroke-width="2"/>
<!-- lower tabs -->
<rect x="1487" y="587" width="68" height="20" fill="#333"/><rect x="1555" y="587" width="67" height="20" fill="#333"/>
<path d="M1622 607V584H1700V607" fill="none" stroke="#646464"/><path d="M1485 607.500H1622M1700 607.500H1832" stroke="#5a5a5a"/>
<rect x="1488" y="589" width="14" height="14" fill="#fff"/><circle cx="1495" cy="596" r="6.500" fill="#000"/>
<text x="1504" y="600" textLength="46">Brushes</text>
<rect x="1557" y="589" width="14" height="14" fill="#f6b552" stroke="#000"/>
<text x="1573" y="600" textLength="44">Patterns</text>
<rect x="1625" y="587" width="14" height="15" fill="url(#g4)" stroke="#000"/>
<text x="1641" y="599" textLength="55">Gradients</text>
<use href="#cfg" x="1821" y="595"/>
<rect x="1485" y="608" width="347" height="425" fill="#3c3c3c"/>
<rect x="1489" y="611" width="338" height="17" fill="#242424"/>
<text x="1489" y="624" style="fill:#5f5f5f;font-style:italic" textLength="26">filter</text>
<use href="#chev" transform="translate(1818 619) scale(.8)"/>
<rect x="1489" y="629" width="339" height="398" fill="#2f2f2f"/>
<rect x="1814" y="630" width="14" height="397" fill="#272727"/>
<rect x="1815" y="655" width="13" height="82" rx="3" fill="#5f5f5f"/>
<rect x="1489" y="1027" width="338" height="6" fill="#272727"/>
<!-- gradient rows -->
<g stroke="#000">
<rect x="1490.500" y="633.500" width="33" height="17" fill="url(#chk2)"/><rect x="1490.500" y="633.500" width="33" height="17" fill="url(#g0)"/>
<rect x="1490.500" y="656.500" width="33" height="17" fill="url(#chk2)"/><rect x="1490.500" y="656.500" width="17" height="17" fill="#fff"/>
<rect x="1490.500" y="679.500" width="33" height="17" fill="url(#chk2)"/><rect x="1490.500" y="679.500" width="33" height="17" fill="url(#g2)"/>
<rect x="1490.500" y="702.500" width="33" height="17" fill="url(#chk2)"/><rect x="1490.500" y="702.500" width="33" height="17" fill="url(#g3)"/>
<rect x="1490.500" y="725.500" width="33" height="17" fill="url(#g4)"/>
<rect x="1490.500" y="748.500" width="33" height="17" fill="url(#g5)"/>
<rect x="1490.500" y="771.500" width="33" height="17" fill="url(#g6)"/>
<rect x="1490.500" y="794.500" width="33" height="17" fill="url(#g7)"/>
<rect x="1490.500" y="817.500" width="33" height="17" fill="url(#g8)"/>
<rect x="1490.500" y="840.500" width="33" height="17" fill="url(#chk2)"/><rect x="1490.500" y="840.500" width="33" height="17" fill="url(#g9)"/>
<rect x="1490.500" y="863.500" width="33" height="17" fill="url(#g10)"/>
<rect x="1490.500" y="886.500" width="33" height="17" fill="url(#g11)"/>
<rect x="1490.500" y="909.500" width="33" height="17" fill="url(#g12)"/>
<rect x="1490.500" y="932.500" width="33" height="17" fill="url(#g13)"/>
<rect x="1490.500" y="955.500" width="33" height="17" fill="url(#g14)"/>
<rect x="1490.500" y="978.500" width="33" height="17" fill="url(#chk2)"/><rect x="1490.500" y="978.500" width="33" height="17" fill="url(#g15)"/>
<rect x="1490.500" y="1001.500" width="33" height="17" fill="url(#g16)"/>
<rect x="1490.500" y="1024.500" width="33" height="3" fill="#fff"/>
</g>
<g>
<text class="l" x="1528" y="646" textLength="100">FG to Transparent</text>
<text class="l" x="1528" y="669" textLength="166">FG to Transparent (Hardedge)</text>
<text class="l" x="1528" y="692" textLength="44">sea sun</text>
<text class="l" x="1528" y="715" textLength="38">sunray</text>
<text class="l" x="1528" y="738" textLength="43">Untitled</text>
<text class="l" x="1528" y="761" textLength="62">Untitled #1</text>
<text class="l" x="1528" y="784" textLength="57">Abstract 1</text>
<text class="l" x="1528" y="807" textLength="58">Abstract 2</text>
<text class="l" x="1528" y="830" textLength="58">Abstract 3</text>
<text class="l" x="1528" y="853" textLength="54">Aneurism</text>
<text class="l" x="1528" y="876" textLength="33">Blinds</text>
<text class="l" x="1528" y="899" textLength="63">Blue Green</text>
<text class="l" x="1528" y="922" textLength="40">Browns</text>
<text class="l" x="1528" y="945" textLength="111">Brushed Aluminium</text>
<text class="l" x="1528" y="968" textLength="79">Burning Paper</text>
<text class="l" x="1528" y="991" textLength="121">Burning Transparency</text>
<text class="l" x="1528" y="1014" textLength="93">Caribbean Blues</text>
</g>
</svg>
</body>
</html>
